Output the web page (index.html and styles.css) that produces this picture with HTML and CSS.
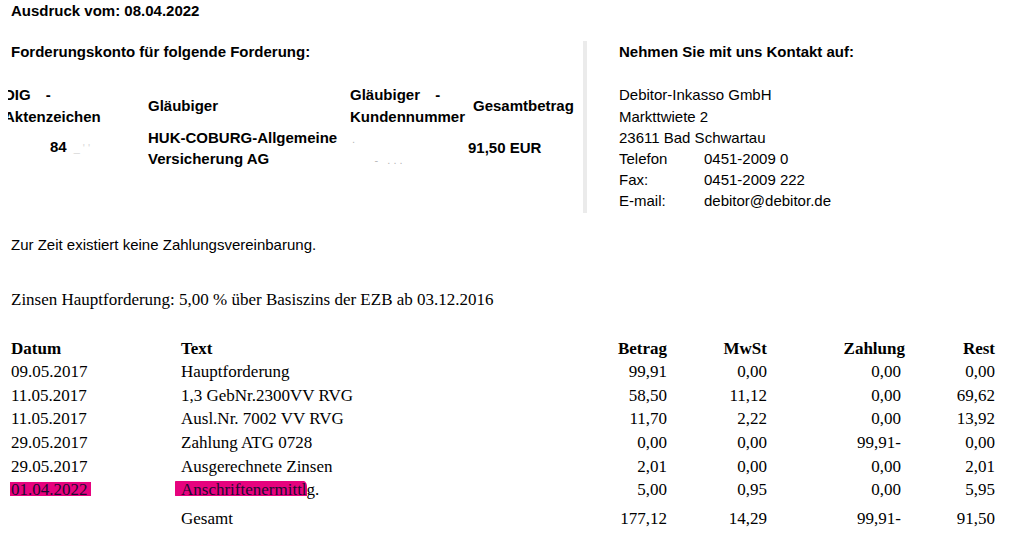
FILE: index.html
```html
<!doctype html>
<html>
<head>
<meta charset="utf-8">
<title>Forderungskonto</title>
<link rel="stylesheet" href="styles.css">
</head>
<body>
	<div class="page">
		<p class="printed">Ausdruck vom: 08.04.2022</p>
		<div class="head">
			<div class="claim">
				<h2>Forderungskonto für folgende Forderung:</h2>
				<div class="claim-grid">
					<div class="cell">DIG <span class="dash">-</span><br>Aktenzeichen</div>
					<div class="cell">Gläubiger</div>
					<div class="cell">Gläubiger <span class="dash">-</span><br>Kundennummer</div>
					<div class="cell total-head">Gesamtbetrag</div>
					<div class="cell file-no">84<span class="erased">_ ' '</span></div>
					<div class="cell">HUK-COBURG-Allgemeine<br>Versicherung AG</div>
					<div class="cell erased-no"><span class="erased">.<br>&nbsp; &nbsp; &nbsp; &nbsp; - &nbsp; . . .</span></div>
					<div class="cell">91,50 EUR</div>
				</div>
			</div>
			<div class="contact">
				<h2>Nehmen Sie mit uns Kontakt auf:</h2>
				<p>Debitor-Inkasso GmbH</p>
				<p>Markttwiete 2</p>
				<p>23611 Bad Schwartau</p>
				<dl>
					<dt>Telefon</dt><dd>0451-2009 0</dd>
					<dt>Fax:</dt><dd>0451-2009 222</dd>
					<dt>E-mail:</dt><dd>debitor@debitor.de</dd>
				</dl>
			</div>
		</div>
		<p class="note">Zur Zeit existiert keine Zahlungsvereinbarung.</p>
		<p class="interest">Zinsen Hauptforderung: 5,00 % über Basiszins der EZB ab 03.12.2016</p>
		<table class="ledger">
			<colgroup>
				<col class="c-date"><col><col class="c-num"><col class="c-num"><col class="c-pay"><col class="c-rest">
			</colgroup>
			<thead>
				<tr><th>Datum</th><th>Text</th><th class="num">Betrag</th><th class="num">MwSt</th><th class="num">Zahlung</th><th class="num">Rest</th></tr>
			</thead>
			<tbody>
				<tr><td>09.05.2017</td><td>Hauptforderung</td><td class="num">99,91</td><td class="num">0,00</td><td class="num pay">0,00</td><td class="num">0,00</td></tr>
				<tr><td>11.05.2017</td><td>1,3 GebNr.2300VV RVG</td><td class="num">58,50</td><td class="num">11,12</td><td class="num pay">0,00</td><td class="num">69,62</td></tr>
				<tr><td>11.05.2017</td><td>Ausl.Nr. 7002 VV RVG</td><td class="num">11,70</td><td class="num">2,22</td><td class="num pay">0,00</td><td class="num">13,92</td></tr>
				<tr><td>29.05.2017</td><td>Zahlung ATG 0728</td><td class="num">0,00</td><td class="num">0,00</td><td class="num pay">99,91-</td><td class="num">0,00</td></tr>
				<tr><td>29.05.2017</td><td>Ausgerechnete Zinsen</td><td class="num">2,01</td><td class="num">0,00</td><td class="num pay">0,00</td><td class="num">2,01</td></tr>
				<tr><td><span class="mark">01.04.2022</span></td><td><span class="mark wide">Anschriftenermittl</span>g.</td><td class="num">5,00</td><td class="num">0,95</td><td class="num pay">0,00</td><td class="num">5,95</td></tr>
				<tr class="sum"><td></td><td>Gesamt</td><td class="num">177,12</td><td class="num">14,29</td><td class="num pay">99,91-</td><td class="num">91,50</td></tr>
			</tbody>
		</table>
	</div>
</body>
</html>
```

FILE: styles.css
```css
/* Kontoauszug */
body{
	margin:0;
	background:#fff;
	color:#000;
	font-family:"Liberation Sans", Arial, sans-serif;
	font-size:15px;
}
.page{
	padding:0 24px 0 11px;
}
.printed{
	margin:0;
	font-weight:bold;
	line-height:21px;
}
.head{
	display:flex;
	margin-top:20px;
}
.head h2{
	margin:0 0 22.4px;
	font-size:15px;
	font-weight:bold;
	line-height:21px;
}
.claim{
	width:575px;
	margin-left:-3px;
	overflow:hidden;
}
.claim h2{
	padding-left:3px;
}
.claim-grid{
	display:grid;
	grid-template-columns:144px 202px 118px 1fr;
	align-items:center;
	margin-left:-4px;
	line-height:21.2px;
	font-weight:bold;
}
.claim-grid .dash{
	margin-left:11px;
}
.claim-grid .total-head{
	padding-left:5px;
}
.claim-grid .file-no{
	padding-left:46px;
}
.claim-grid .erased{
	margin-left:7px;
	color:#d8d8d8;
	font-size:11px;
	font-weight:normal;
}
.claim-grid .erased-no .erased{
	margin-left:2px;
	line-height:10px;
	color:#b8b8b8;
}
.contact{
	flex:1;
	border-left:4px solid #ebebeb;
	padding:0 0 1.5px 32px;
	line-height:21.2px;
}
.contact p{
	margin:0;
}
.contact dl{
	display:grid;
	grid-template-columns:85px 1fr;
	margin:0;
}
.contact dd{
	margin:0;
}
.note{
	margin:20.5px 0 0;
	line-height:21px;
}
.interest{
	margin:33px 0 0;
	font-family:"Liberation Serif", "Times New Roman", serif;
	font-size:17px;
	line-height:24px;
}
.ledger{
	width:984px;
	margin-top:25px;
	border-collapse:collapse;
	table-layout:fixed;
	font-family:"Liberation Serif", "Times New Roman", serif;
	font-size:17px;
	line-height:23.6px;
}
.ledger .c-date{
	width:170px;
}
.ledger .c-num{
	width:100px;
}
.ledger .c-pay{
	width:138px;
}
.ledger .c-rest{
	width:90px;
}
.ledger th,
.ledger td{
	padding:0;
	text-align:left;
	white-space:nowrap;
}
.ledger th{
	font-weight:bold;
}
.ledger .num{
	text-align:right;
}
.ledger td.pay{
	padding-right:4px;
}
.ledger .sum td{
	padding-top:5px;
}
.mark{
	color:#1c0a30;
	background:linear-gradient(#e6037e, #e6037e) no-repeat;
	background-size:100% 14px;
	background-position:0 2px;
	padding:0 3px 0 1px;
	margin:0 -3px 0 -1px;
}
.mark.wide{
	padding-left:6px;
	margin-left:-6px;
	padding-right:0;
	margin-right:0;
	background-size:100% 15px;
	background-position:0 1px;
	border-radius:2px 6px 2px 4px;
}
```
